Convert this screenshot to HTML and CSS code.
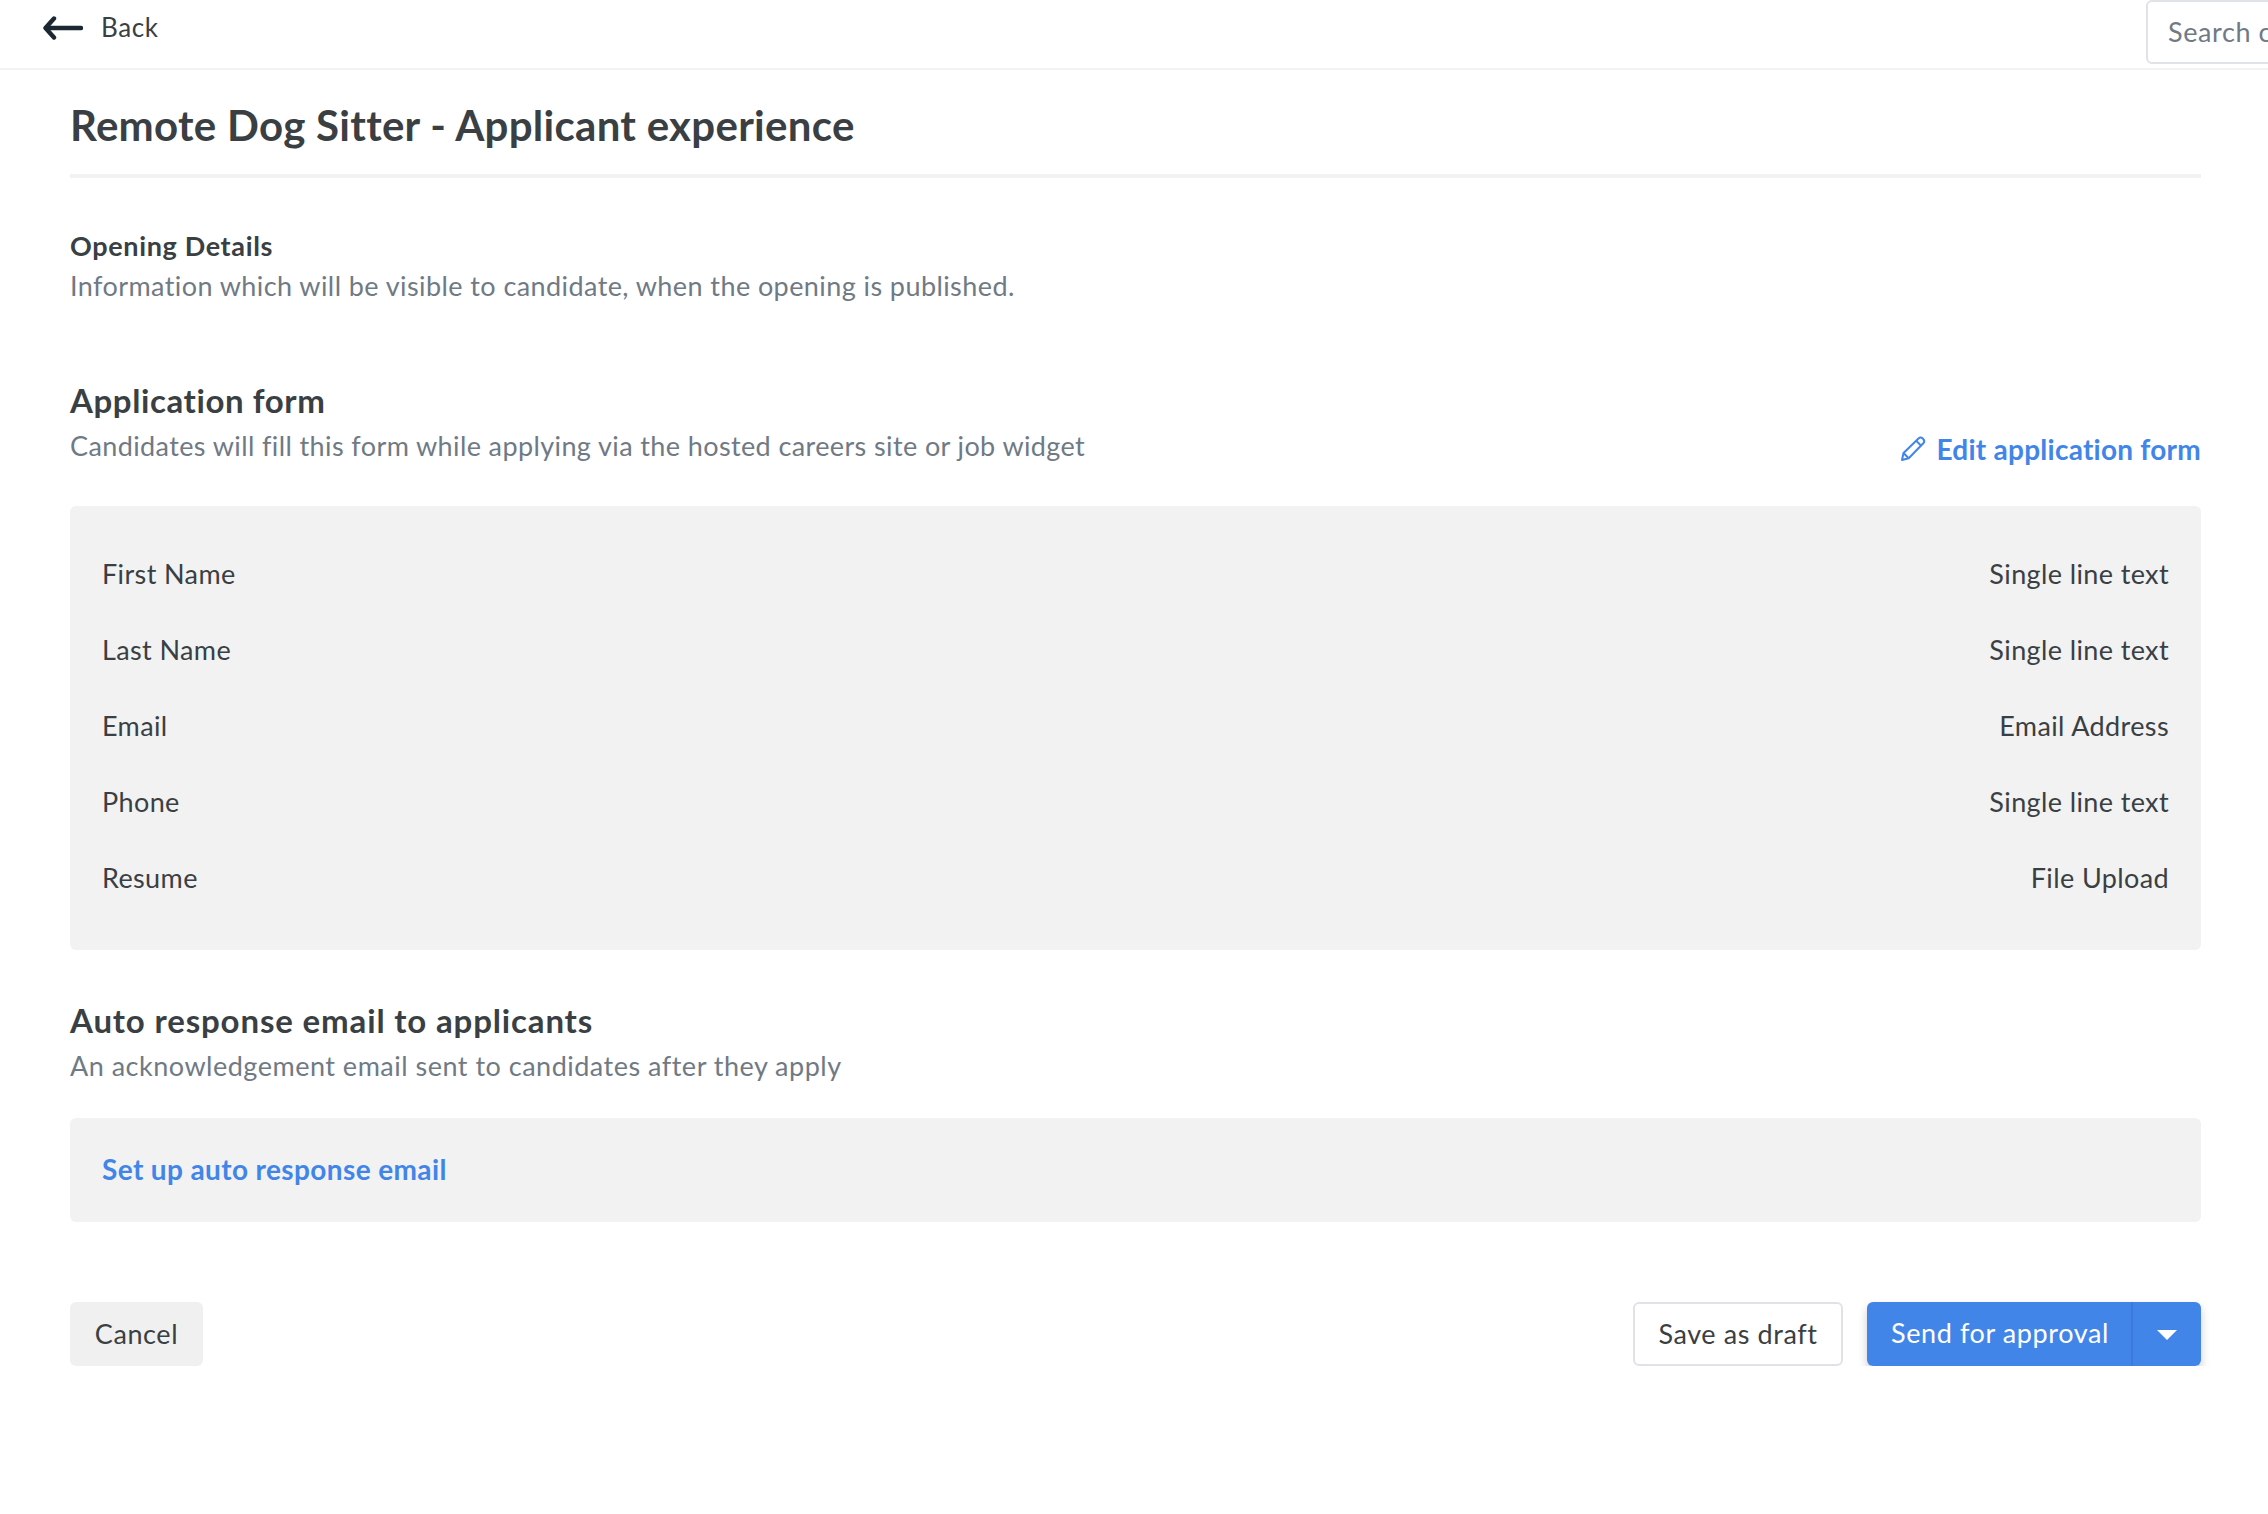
FILE: index.html
```html
<!DOCTYPE html>
<html lang="en">
<head>
    <meta charset="UTF-8">
    <meta name="viewport" content="width=device-width, initial-scale=1.0">
    <title>Remote Dog Sitter - Applicant experience</title>
    <link rel="stylesheet" href="styles.css">
</head>
<body>
    <header class="topbar">
        <a class="back" href="#">
            <svg class="back-icon" width="40" height="24" viewBox="0 0 40 24" fill="none" stroke="#1b2733" stroke-width="4.4" stroke-linecap="round" stroke-linejoin="round">
                <path d="M38 12H3"/>
                <path d="M11 2.5L2.5 12L11 21.5"/>
            </svg>
            <span>Back</span>
        </a>
        <input class="search" type="text" placeholder="Search candidates">
    </header>

    <main class="page">
        <h1 class="title">Remote Dog Sitter - Applicant experience</h1>

        <section class="details">
            <h3>Opening Details</h3>
            <p class="hint">Information which will be visible to candidate, when the opening is published.</p>
        </section>

        <section class="form-section">
            <div class="section-head">
                <div>
                    <h2>Application form</h2>
                    <p class="hint">Candidates will fill this form while applying via the hosted careers site or job widget</p>
                </div>
                <a class="edit-link" href="#">
                    <svg width="26" height="26" viewBox="0 0 26 26" fill="none" stroke="#4285e8" stroke-width="2" stroke-linejoin="round">
                        <path d="M2 24L3.5 17L18.5 2.5C19.8 1.3 21.5 1.3 23 2.7C24.5 4.2 24.5 5.9 23.3 7.2L8.7 22.2Z"/>
                        <path d="M3.5 17L8.7 22.2"/>
                        <path d="M16.2 4.8L21 9.6"/>
                    </svg>
                    Edit application form
                </a>
            </div>
            <div class="panel fields">
                <div class="field"><span>First Name</span><span>Single line text</span></div>
                <div class="field"><span>Last Name</span><span>Single line text</span></div>
                <div class="field"><span>Email</span><span>Email Address</span></div>
                <div class="field"><span>Phone</span><span>Single line text</span></div>
                <div class="field"><span>Resume</span><span>File Upload</span></div>
            </div>
        </section>

        <section class="auto-section">
            <h2>Auto response email to applicants</h2>
            <p class="hint">An acknowledgement email sent to candidates after they apply</p>
            <div class="panel setup">
                <a href="#">Set up auto response email</a>
            </div>
        </section>

        <div class="actions">
            <button class="btn btn-cancel" type="button">Cancel</button>
            <div class="actions-right">
                <button class="btn btn-draft" type="button">Save as draft</button>
                <div class="split">
                    <button class="btn btn-send" type="button">Send for approval</button>
                    <button class="btn btn-caret" type="button" aria-label="More"><span class="caret"></span></button>
                </div>
            </div>
        </div>
    </main>
</body>
</html>
```

FILE: styles.css
```css
* {
    box-sizing: border-box;
}
body {
    margin: 0;
    background: #fff;
    color: #3a3f44;
    font-family: Lato, "Open Sans", sans-serif;
    font-size: 27px;
    overflow-x: hidden;
}
a {
    text-decoration: none;
}
h1, h2, h3, p {
    margin: 0;
}
.topbar {
    display: flex;
    justify-content: space-between;
    height: 70px;
    padding-left: 43px;
    border-bottom: 2px solid #f2f3f4;
    overflow: hidden;
}
.back {
    display: flex;
    align-items: center;
    gap: 18px;
    height: 54px;
    color: #3a3f44;
    font-size: 26px;
    letter-spacing: 0.6px;
}
.back-icon {
    flex: none;
    margin-top: 1px;
}
.search {
    flex: none;
    width: 300px;
    height: 64px;
    margin-right: -178px;
    padding: 0 20px 2px;
    border: 2px solid #dfe3e8;
    border-radius: 6px;
    font-family: inherit;
    font-size: 27px;
    letter-spacing: 0.6px;
}
.search::placeholder {
    color: #6f7a85;
    opacity: 1;
}
.page {
    padding: 0 67px 0 70px;
}
.title {
    height: 108px;
    padding-top: 29px;
    border-bottom: 4px solid #f2f2f2;
    font-size: 42px;
    line-height: 52px;
    font-weight: 700;
    letter-spacing: 0.28px;
}
.details {
    margin-top: 50px;
}
.details h3 {
    font-size: 27px;
    line-height: 36px;
    font-weight: 700;
    letter-spacing: 0.65px;
}
.hint {
    color: #6f7a85;
    font-size: 27px;
    line-height: 36px;
    letter-spacing: 0.42px;
}
.details .hint {
    margin-top: 4px;
}
.form-section {
    margin-top: 77px;
}
h2 {
    font-size: 33px;
    line-height: 38px;
    font-weight: 700;
    letter-spacing: 0.6px;
}
.form-section .hint,
.auto-section .hint {
    margin-top: 9px;
}
.form-section .hint {
    letter-spacing: 0.39px;
}
.section-head {
    display: flex;
    justify-content: space-between;
    align-items: flex-end;
}
.edit-link {
    display: flex;
    align-items: center;
    gap: 10px;
    color: #4285e8;
    font-size: 28px;
    font-weight: 700;
    line-height: 36px;
    margin-bottom: -3px;
    letter-spacing: 0.25px;
}
.panel {
    background: #f2f2f2;
    border-radius: 6px;
}
.fields {
    height: 444px;
    margin-top: 42px;
    padding: 29px 32px;
}
.field {
    display: flex;
    justify-content: space-between;
    align-items: center;
    height: 76px;
    font-size: 27px;
    letter-spacing: 0.38px;
}
.auto-section {
    margin-top: 51px;
}
.auto-section h2 {
    letter-spacing: 0.85px;
}
.auto-section .hint {
    letter-spacing: 0.5px;
}
.setup {
    display: flex;
    align-items: center;
    height: 104px;
    margin-top: 34px;
    padding: 0 32px 2px;
}
.setup a {
    color: #4285e8;
    font-size: 28px;
    font-weight: 700;
    letter-spacing: 0.38px;
}
.actions {
    display: flex;
    justify-content: space-between;
    margin-top: 80px;
}
.actions-right {
    display: flex;
    gap: 24px;
}
.btn {
    height: 64px;
    padding-bottom: 3px;
    border: 0;
    border-radius: 6px;
    font-family: inherit;
    font-size: 27px;
    letter-spacing: 0.6px;
    color: #3a3f44;
    cursor: pointer;
}
.btn-cancel {
    width: 133px;
    background: #f0f0f0;
}
.btn-draft {
    width: 210px;
    background: #fff;
    border: 2px solid #dfe3e8;
}
.split {
    display: flex;
    border-radius: 6px;
    box-shadow: 0 5px 10px rgba(0, 0, 0, 0.2);
}
.btn-send {
    width: 266px;
    padding: 0 0 3px 2px;
    background: #4285e8;
    color: #fff;
    border-radius: 6px 0 0 6px;
    border-right: 2px solid #3c7bd8;
}
.btn-caret {
    display: flex;
    justify-content: center;
    align-items: center;
    width: 68px;
    padding: 2px 0 0;
    background: #4285e8;
    border-radius: 0 6px 6px 0;
}
.caret {
    width: 0;
    height: 0;
    border-left: 10px solid transparent;
    border-right: 10px solid transparent;
    border-top: 10px solid #fff;
}
```
